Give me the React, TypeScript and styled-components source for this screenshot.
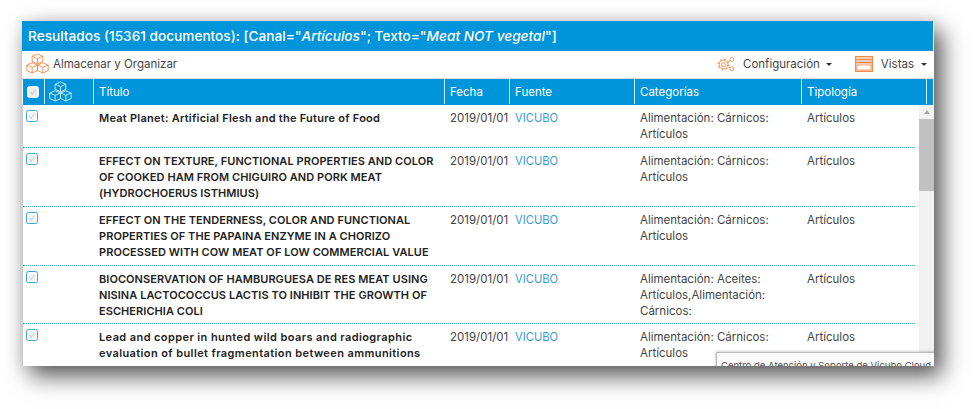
import React from "react";
import styled, { createGlobalStyle } from "styled-components";

const Global = createGlobalStyle`
  html, body { margin: 0; padding: 0; background: #fff; }
  body { font-family: "Inter", "Open Sans", sans-serif; overflow: hidden; }
`;

const COLS = "22px 49px 351px 65px 125px 167px 125px";

const Page = styled.div`
  width: 977px;
  height: 409px;
  padding: 21px 0 0 22px;
  box-sizing: border-box;
`;
const Panel = styled.div`
  position: relative;
  width: 912px;
  height: 345px;
  background: #fff;
  box-shadow: 8px 10px 22px rgba(0, 0, 0, 0.65), 0 0 14px rgba(0, 0, 0, 0.1);
`;
const Clip = styled.div`
  position: relative;
  width: 100%;
  height: 100%;
  display: flex;
  flex-direction: column;
  overflow: hidden;
`;
const Title = styled.div`
  height: 30px;
  flex: none;
  background: #0095db;
  color: #fff;
  font-size: 13.65px;
  font-weight: 500;
  line-height: 30px;
  padding-left: 6px;
  margin-right: 1px;
  white-space: nowrap;
  em { font-style: italic; }
`;
const Toolbar = styled.div`
  height: 28px;
  flex: none;
  display: flex;
  align-items: center;
  padding: 0 7.5px 2px 3px;
  font-size: 11.5px;
  color: #444;
  border-bottom: 1px solid #ddd;
  box-sizing: border-box;
`;
const ToolLabel = styled.span`
  margin-left: 3px;
`;
const Spacer = styled.div`
  flex: 1;
`;
const Menu = styled.div<{ $gap: number; $right: number }>`
  display: flex;
  align-items: center;
  gap: ${(p) => p.$gap}px;
  margin-right: ${(p) => p.$right}px;
`;
const Caret = styled.span`
  width: 0;
  height: 0;
  margin-left: -1.5px;
  margin-top: 2px;
  border-left: 3px solid transparent;
  border-right: 3px solid transparent;
  border-top: 3.5px solid #333;
`;
const HeadRow = styled.div`
  height: 26px;
  flex: none;
  background: #0095db;
  display: grid;
  grid-template-columns: ${COLS} 1fr;
  color: #fff;
  font-size: 11.5px;
  margin: 0 1px 0 1px;
`;
const HeadCell = styled.div`
  display: flex;
  align-items: center;
  padding: 1px 0 0 5px;
  border-right: 1.5px solid #cfeaf8;
  box-sizing: border-box;
  margin-bottom: 1px;
`;
const CheckHead = styled(HeadCell)`
  padding-left: 4px;
`;
const IconHead = styled(HeadCell)`
  padding-left: 3px;
`;
const Body = styled.div`
  flex: 1;
  display: flex;
  min-height: 0;
  border-left: 1px solid #ccc;
`;
const Rows = styled.div`
  width: 892px;
  flex: none;
`;
const Row = styled.div<{ $h: number }>`
  height: ${(p) => p.$h}px;
  box-sizing: border-box;
  display: grid;
  grid-template-columns: ${COLS};
  border-bottom: 1px dotted #2fa6de;
  font-size: 11.5px;
  line-height: 16px;
  color: #444;
`;
const Cell = styled.div`
  padding: 5px 5px 0 5px;
`;
const CheckCell = styled.div`
  padding: 5px 0 0 3px;
`;
const TitleCell = styled(Cell)<{ $track: number }>`
  color: #222;
  font-weight: 600;
  font-size: 11px;
  letter-spacing: ${(p) => p.$track}px;
  padding-right: 0;
  white-space: nowrap;
`;
const Link = styled.span`
  color: #3b9bd6;
  font-size: 11.2px;
`;
const Check = styled.div<{ $head?: boolean }>`
  width: 10px;
  height: 10px;
  border: 1px solid ${(p) => (p.$head ? "#e6f3fa" : "#3ba4de")};
  border-radius: 2.5px;
  background: ${(p) => (p.$head ? "#ececec" : "#f2f6f9")};
  box-shadow: inset 0 0 0 1px #fff;
  display: flex;
  align-items: center;
  justify-content: center;
`;
const Scrollbar = styled.div`
  width: 15px;
  margin-left: 4px;
  background: #f1f1f1;
  display: flex;
  flex-direction: column;
  align-items: center;
`;
const ScrollUp = styled.div`
  height: 14px;
  width: 100%;
  display: flex;
  align-items: center;
  justify-content: center;
  &::after {
    content: "";
    border-left: 3.5px solid transparent;
    border-right: 3.5px solid transparent;
    border-bottom: 4px solid #a8a8a8;
  }
`;
const Thumb = styled.div`
  width: 100%;
  height: 72px;
  background: #c1c1c1;
`;
const Widget = styled.div`
  position: absolute;
  left: 694px;
  top: 331px;
  width: 240px;
  height: 40px;
  background: #fafafa;
  border: 1px solid #bbb;
  box-shadow: 0 0 3px rgba(0, 0, 0, 0.3);
  padding: 7px 0 0 4px;
  box-sizing: border-box;
  font-size: 9.5px;
  line-height: 12px;
  color: #555;
  white-space: nowrap;
`;

const Cubes = ({ color, size }: { color: string; size: number }) => (
  <svg width={size} height={size * 0.86} viewBox="0 0 28 24" fill="none" stroke={color} strokeWidth="1" strokeLinejoin="round">
    <path d="M14 1l6 2.600v5.800L14 12 8 9.400V3.600z" />
    <path d="M8 3.600l6 2.600 6-2.600M14 6.200V12" />
    <path d="M8 10.800l6 2.600v6.200L8 22.400l-6-2.800v-6.200z" />
    <path d="M2 13.400l6 2.600 6-2.600M8 16v6.400" />
    <path d="M20 10.800l6 2.600v6.200l-6 2.800-6-2.800v-6.200z" />
    <path d="M14 13.400l6 2.600 6-2.600M20 16v6.400" />
  </svg>
);

const Gears = () => (
  <svg width="18" height="16" viewBox="0 0 18 16" fill="none" stroke="#f79a63" strokeWidth="1">
    <circle cx="6.500" cy="8.500" r="2" />
    <circle cx="6.500" cy="8.500" r="4.300" />
    <circle cx="6.500" cy="8.500" r="5.200" strokeDasharray="1.800 2.280" strokeWidth="1.400" />
    <circle cx="14.800" cy="3.400" r="2" />
    <circle cx="14.800" cy="12.800" r="2" />
    <path d="M11 5.800l2-1.200M11.500 10.800l1.600 1" />
  </svg>
);

const Panels = () => (
  <svg width="18" height="16" viewBox="0 0 18 16" fill="none" stroke="#f58a4b" strokeWidth="1.200">
    <rect x="0.600" y="0.600" width="16.800" height="14.800" fill="#fde4d3" />
    <path d="M1 3.500h16M1 6.500h16" strokeWidth="1.500" />
    <rect x="2" y="9" width="14" height="5" fill="#fff" strokeWidth="0.800" />
  </svg>
);

const CheckMark = () => (
  <svg width="8" height="8" viewBox="0 0 8 8" fill="none" stroke="#d4d4d4" strokeWidth="1.200">
    <path d="M1.500 4.200l1.800 2L6.500 1.500" />
  </svg>
);

const rows = [
  { h: 43, track: 0.25, t: ["Meat Planet: Artificial Flesh and the Future of Food"], c: ["Alimentación: Cárnicos:", "Artículos"] },
  { h: 59, track: 0.06, t: ["EFFECT ON TEXTURE, FUNCTIONAL PROPERTIES AND COLOR", "OF COOKED HAM FROM CHIGUIRO AND PORK MEAT", "(HYDROCHOERUS ISTHMIUS)"], c: ["Alimentación: Cárnicos:", "Artículos"] },
  { h: 59, track: 0.06, t: ["EFFECT ON THE TENDERNESS, COLOR AND FUNCTIONAL", "PROPERTIES OF THE PAPAINA ENZYME IN A CHORIZO", "PROCESSED WITH COW MEAT OF LOW COMMERCIAL VALUE"], c: ["Alimentación: Cárnicos:", "Artículos"] },
  { h: 58, track: 0.06, t: ["BIOCONSERVATION OF HAMBURGUESA DE RES MEAT USING", "NISINA LACTOCOCCUS LACTIS TO INHIBIT THE GROWTH OF", "ESCHERICHIA COLI"], c: ["Alimentación: Aceites:", "Artículos,Alimentación:", "Cárnicos:"] },
  { h: 43, track: 0.4, t: ["Lead and copper in hunted wild boars and radiographic", "evaluation of bullet fragmentation between ammunitions"], c: ["Alimentación: Cárnicos:", "Artículos"] },
];

const lines = (l: string[]) =>
  l.map((s, i) => (
    <React.Fragment key={i}>
      {i > 0 && <br />}
      {s}
    </React.Fragment>
  ));

export default function App() {
  return (
    <Page>
      <Global />
      <Panel>
        <Clip>
          <Title>
            Resultados (15361 documentos): [Canal="<em>Artículos</em>"; Texto="<em>Meat NOT vegetal</em>"]
          </Title>
          <Toolbar>
            <Cubes color="#f58a4b" size={25} />
            <ToolLabel>Almacenar y Organizar</ToolLabel>
            <Spacer />
            <Menu $gap={8} $right={22.5}>
              <Gears />
              <span>Configuración</span>
              <Caret />
            </Menu>
            <Menu $gap={8} $right={0}>
              <Panels />
              <span>Vistas</span>
              <Caret />
            </Menu>
          </Toolbar>
          <HeadRow>
            <CheckHead>
              <Check $head>
                <CheckMark />
              </Check>
            </CheckHead>
            <IconHead>
              <Cubes color="#d5eefa" size={25} />
            </IconHead>
            <HeadCell>Título</HeadCell>
            <HeadCell>Fecha</HeadCell>
            <HeadCell>Fuente</HeadCell>
            <HeadCell>Categorías</HeadCell>
            <HeadCell>Tipología</HeadCell>
            <div />
          </HeadRow>
          <Body>
            <Rows>
              {rows.map((r, i) => (
                <Row key={i} $h={r.h}>
                  <CheckCell>
                    <Check>
                      <CheckMark />
                    </Check>
                  </CheckCell>
                  <div />
                  <TitleCell $track={r.track}>{lines(r.t)}</TitleCell>
                  <Cell>2019/01/01</Cell>
                  <Cell>
                    <Link>VICUBO</Link>
                  </Cell>
                  <Cell>{lines(r.c)}</Cell>
                  <Cell>Artículos</Cell>
                </Row>
              ))}
            </Rows>
            <Scrollbar>
              <ScrollUp />
              <Thumb />
            </Scrollbar>
          </Body>
          <Widget>Centro de Atención y Soporte de Vicubo Cloud</Widget>
        </Clip>
      </Panel>
    </Page>
  );
}
